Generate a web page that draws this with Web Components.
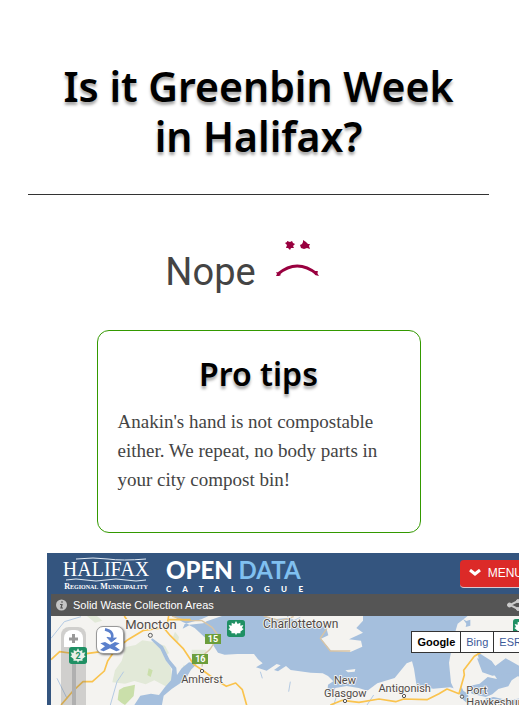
<!DOCTYPE html>
<html lang="en">
<head>
<meta charset="utf-8">
<meta name="viewport" content="width=device-width, initial-scale=1">
<title>Is it Greenbin Week in Halifax?</title>
<style>
html, body { margin: 0; height: 100%; }
body { background: #fff; color: #444; font-family: "Liberation Serif", serif; font-size: 19px; }
</style>
</head>
<body>
<greenbin-page>
  <page-title slot="title">Is it Greenbin Week in Halifax?</page-title>
  <week-answer slot="answer">Nope</week-answer>
  <pro-tip slot="tip">
    <span slot="heading">Pro tips</span>
    Anakin's hand is not compostable either. We repeat, no body parts in your city compost bin!
  </pro-tip>
  <open-data-frame slot="map">
    <collection-map></collection-map>
  </open-data-frame>
</greenbin-page>

<script>
function define(name, html) {
  const template = document.createElement('template');
  template.innerHTML = html;
  customElements.define(name, class extends HTMLElement {
    constructor() {
      super();
      this.attachShadow({ mode: 'open' }).append(template.content.cloneNode(true));
    }
  });
}

define('greenbin-page', `
<style>
:host { display: flex; flex-direction: column; min-height: 100vh; overflow: hidden; }
main { display: flex; flex-direction: column; flex: 1; }
header { margin: 0 30px 0 28px; padding: 61px 24px 33px; border-bottom: 1px solid #333; }
.answer { padding: 40px 48px 0 14px; }
.tip { display: flex; justify-content: center; padding: 30px 22px 20px 20px; }
.map { display: flex; flex: 1; margin-left: 47px; min-height: 152px; }
</style>
<main>
  <header><slot name="title"></slot></header>
  <section class="answer"><slot name="answer"></slot></section>
  <section class="tip"><slot name="tip"></slot></section>
  <section class="map"><slot name="map"></slot></section>
</main>`);

define('page-title', `
<style>
:host { display: block; }
h1 { margin: 0; color: #000; font: 600 41px/50px "Noto Sans", sans-serif; text-align: center; text-shadow: 0 3px 3px rgba(0,0,0,.35); }
</style>
<h1><slot></slot></h1>`);

define('week-answer', `
<style>
:host { display: flex; justify-content: center; gap: 20px; color: #444; }
p { margin: 0; font: 400 38px/56px Roboto, sans-serif; padding-top: 9px; }
svg { width: 44px; height: 40px; margin-top: 5px; }
</style>
<p><slot></slot></p>
<svg viewBox="0 0 44 40" role="img" aria-label="Sad face" fill="#99003f">
  <path d="M11 1l3 1 2-1 1 2 2 1-2 2 1 2-3 0-1 2-2-2-2 0 1-3-2-2 2-1z"/>
  <path d="M27 0l3 2 2 2 2 0-1 2 1 3-3-1-3 1-3-1-1-3 2-1 1-2z"/>
  <path d="M2 34Q21 18 41 34" fill="none" stroke="#99003f" stroke-width="3"/>
  <path d="M0 32l3 1 2 2-2 1-3 0 1-2zM38 31l4 0-1 2 2 3-4-1z"/>
</svg>`);

define('pro-tip', `
<style>
:host { display: block; box-sizing: border-box; width: 100%; max-width: 324px; border: 1px solid #390; border-radius: 12px; padding: 18px 36px 38px 20px; }
h2 { margin: 0 -16px 8px 0; color: #000; font: 600 32px/50px "Noto Sans", sans-serif; text-align: center; text-shadow: 0 3px 3px rgba(0,0,0,.35); }
p { margin: 0; line-height: 29px; }
</style>
<h2><slot name="heading"></slot></h2>
<p><slot></slot></p>`);

define('open-data-frame', `
<style>
:host { display: flex; flex: 1; min-width: 0; overflow: hidden; background: #34557f; font-family: "Liberation Sans", sans-serif; }
.wide { display: flex; flex-direction: column; flex: none; width: calc(100% + 32px); }
.top { display: flex; align-items: center; height: 41px; padding: 0 16px; color: #fff; }
.halifax { display: flex; flex-direction: column; align-items: center; flex: none; width: 86px; margin-right: 17px; font-family: "Liberation Serif", serif; white-space: nowrap; }
.halifax b { font-weight: 400; font-size: 20px; line-height: 17px; }
.halifax svg { display: block; width: 84px; height: 4px; }
.halifax small { font-size: 8px; line-height: 9px; font-weight: 700; font-variant: small-caps; }
.data { flex: none; width: 137px; padding-top: 2px; font-family: Lato, sans-serif; }
.data b { display: block; font-size: 24px; line-height: 29px; font-weight: 900; white-space: nowrap; }
.data em { font-style: normal; font-weight: 700; color: #80c0f0; }
.data span { display: block; font: 900 8px/10px Lato, sans-serif; text-align-last: justify; }
button { display: flex; align-items: center; gap: 7px; flex: none; height: 28px; margin-left: auto; padding: 0 12px 0 9px; border: 0; border-bottom: 1px solid #d8c8d0; border-radius: 4px; background: #dc2a28; color: #fff; font: 12px/26px "Liberation Sans", sans-serif; }
.bar { display: flex; align-items: center; height: 22px; margin-left: 4px; padding: 0 30px 0 5px; background: #555; color: #fff; font-size: 11px; }
.bar svg { flex: none; }
.bar h3 { flex: 1; margin: 0 0 0 6px; font-weight: 400; font-size: 11px; }
.body { display: flex; flex: 1; margin-left: 4px; }
</style>
<div class="wide">
  <div class="top">
    <div class="halifax">
      <svg viewBox="0 0 84 4" fill="none" stroke="#dfe8f2"><path d="M12 2Q30 0 44 2T82 2"/></svg>
      <b>HALIFAX</b>
      <svg viewBox="0 0 84 4" fill="none" stroke="#dfe8f2"><path d="M2 2q10-2 20 0t20 0 20 0 20 0"/></svg>
      <small>Regional Municipality</small>
    </div>
    <div class="data"><b>OPEN <em>DATA</em></b><span>C A T A L O G U E</span></div>
    <button type="button"><svg width="12" height="8" viewBox="0 0 12 8" fill="none" stroke="#fff" stroke-width="3"><path d="M1 1l5 4 5-4"/></svg>MENU</button>
  </div>
  <div class="bar">
    <svg width="11" height="12" viewBox="0 0 11 12"><circle cx="5.5" cy="6" r="5.5" fill="#c4c4c4"/><path d="M5 3h2M4 5.500h2L5 9h2" fill="none" stroke="#555" stroke-width="1.2"/></svg>
    <h3>Solid Waste Collection Areas</h3>
    <svg width="14" height="12" viewBox="0 0 14 12" fill="#ccc" stroke="#ccc"><path d="M11 2L3 6l8 4" fill="none" stroke-width="2"/><circle cx="2.500" cy="6" r="2"/><circle cx="11" cy="2" r="1.500"/><circle cx="11" cy="10" r="1.500"/></svg>
  </div>
  <div class="body"><slot></slot></div>
</div>`);

define('collection-map', `
<style>
:host { display: block; flex: 1; position: relative; overflow: hidden; background: #f4f3f0; }
.tiles { position: absolute; inset: 0; width: 100%; height: 100%; }
.zoom { position: absolute; left: 10px; top: 11px; bottom: 0; width: 25px; border-radius: 8px 8px 0 0; background: rgba(100,100,100,.25); }
.zoom::after { content: ""; position: absolute; left: 11px; top: 36px; bottom: 0; width: 4px; background: #b0b0b0; }
.zoom button { display: flex; align-items: center; justify-content: center; width: 19px; height: 17px; margin: 3px; padding: 0; border: 0; border-radius: 8px 8px 0 0; background: #fff; }
.marker { position: absolute; left: 18px; top: 31px; }
.locate { position: absolute; left: 45px; top: 10px; display: flex; align-items: center; justify-content: center; width: 28px; height: 28px; padding: 0; border: 1px solid #999; border-radius: 7px; background: #fff; box-shadow: 1px 1px 2px rgba(0,0,0,.5); }
nav { position: absolute; right: 20px; top: 15px; display: flex; background: #fff; border: 1px solid #333; font: 11px/20px "Liberation Sans", sans-serif; }
nav button { padding: 0 5px; border: 0; border-left: 1px solid #333; background: #fff; color: #3c5a9a; font: inherit; }
nav button:first-child { border-left: 0; font-weight: 700; color: #000; }
</style>
<svg class="tiles" viewBox="12 3 1500 267" preserveAspectRatio="xMinYMin slice">
  <defs>
    <path id="leaf" d="M0-22l5 9 8-4 0 9 9-2-4 9 5 3-10 8 1 5-11 0-3 6-3-6-11 0 1-5-10-8 5-3-4-9 9 2 0-9 8 4z" fill="#fff"/>
  </defs>
  <rect x="12" y="3" width="1500" height="900" fill="#f4f3f0"/>
  <g fill="#e2e9d8">
    <path d="M236 96l30-6 20-14 30 4 38 12 12 22-14 12 20 34 4 40-20 14-34-18-26 12-34-10-28 8-38-4 8-36 20-28zM120 3l30 0 16 14-22 6zM384 50l12 16-4 20-14-20zM410 150l18 10-14 30-20 6zM434 104l44 0 0 16-44 4z"/>
    <path d="M216 225l14-8 34-8-4 34-26 27-10-6-12-10zM305 160l12 6-6 20-10-6z" fill="#cadfaa"/>
  </g>
  <g fill="#a5bfdd">
    <path d="M358 3h19l30 18 20 8 42-4 10 -6 46-16h500l240 0-12 12-16 40-14 50-4 36 8 40 22 46 14 10 4 32-18-14-18-32-22-6-50 4-50-8-8-52-6-22-16 6-36 44-52 16-30 22-26-8-36-6-34 6-6 18-18-6 2-22 16-10-16-16-16-8-36-2-60-8-14-12-24 16-12-4 20-14-12-4-30 20-32-10 20-12-14-12-12-16-50 0-38 2-20-6-18-28-22-18-30-28-16-8-20 10 6-14 50-14 26-12 6-14-14-4-24-4 -14-24-20 6 -20 16-28 2-20-22-30-8-30 2-24-8z"/>
    <path d="M262 270l18-28 32-6 24 4 18-24 18-20 4-34-20-26-16-34-28-28 4-4 32 24 20 40 20 24 2 22 14-20 22-18 24 4-18 18-14 24-14 14-30 20-24 20-6 32z"/>
    <path d="M1290 110l44 28 10 16 32-24 40 22 100-20v60l-104-8-18 12-10 18-30 8-18 16-20 8-42-10-10-22 34-8 24-20 28 6-14-22-40-36zM1316 250l24-4 44 10 120-20v40h-190z"/>
  </g>
  <g fill="#f4f3f0">
    <path d="M650 3l30 10 40-4 30 8 60 4 28 18 6 22-22 10 30 36 58 4 36-16-4-18-36-4 42-20-20-14 20-22V3zM1222 60l10-34 30-23h250v106l-120-6-44 16-24-8-46 2-24 64-16 60-12-4-14-30-6-60z"/>
    <path d="M895 166l30-4-2 8-20 2zM1270 175l40-16 8 18-26 12z"/>
  </g>
  <path fill="#a5bfdd" d="M1248 12l10 6 12-4v18l-14 4 2-10zM1290 130l44 10 14 16 28-20 30 20 100-10v30h-130l-40 6-30-10z"/>
  <g fill="none" stroke="#b4cae3" stroke-width="3">
    <path d="M12 70l40-50 50-15M190 270l20-70 20-30M640 170l6 20M730 200l-5 30M960 270l20-30M30 190l30 60M720 3l20 14 20-10M860 270l10-30"/>
  </g>
  <g fill="none" stroke="#d8c4a4" stroke-width="4">
    <path d="M375 3l40 14 50 0 30 20 20 26-26 40-18 16-6 36M840 40l-20 30 30 38 60 0M650 3l50 14 40-12"/>
  </g>
  <g fill="none" stroke="#fac34d" stroke-width="5" stroke-linejoin="round">
    <path d="M12 134l26-24 30 4 50 2 44-6 44-8 34-26 50-30 60-8 20 24 38 38 32 48 30 20 38 28 30 18 28-10 20 20 14 50"/>
    <path d="M42 270l34-40 32-30 28 0 36-32 10-30 26-38M365 14h66M365 3l-8 44M232 3l16 24"/>
    <path d="M850 270l36-14 50 6 60-10 50 8 24-8 70 2 36-18 24-14 36 14 16-56 -2-14 32-42 40-24"/>
  </g>
  <g>
    <rect x="474" y="57" width="48" height="30" fill="#6c9e3c"/><rect x="435" y="117" width="48" height="30" fill="#6c9e3c"/>
    <rect x="540" y="15" width="54" height="51" rx="8" fill="#1f9064"/><use href="#leaf" x="567" y="40"/>
    <rect x="1398" y="12" width="54" height="51" rx="8" fill="#1f9064"/><use href="#leaf" x="1425" y="37"/>
  </g>
  <g fill="#f4f3f0" stroke="#555" stroke-width="3"><circle cx="310" cy="61" r="6"/><circle cx="465" cy="168" r="5"/><circle cx="894" cy="258" r="5"/><circle cx="1071" cy="243" r="5"/><circle cx="1245" cy="245" r="5"/></g>
  <g font-family="Roboto, sans-serif" font-size="33" fill="#514b48" stroke="#f8f7f4" stroke-width="5" paint-order="stroke" text-anchor="middle">
    <text x="312" y="42" font-size="39">Moncton</text>
    <text x="761" y="39" font-size="36">Charlottetown</text>
    <text x="465" y="203">Amherst</text>
    <text x="894" y="207">New</text>
    <text x="895" y="245">Glasgow</text>
    <text x="1073" y="230">Antigonish</text>
    <text x="1258" y="237" text-anchor="start">Port</text>
    <text x="1258" y="273" text-anchor="start">Hawkesbury</text>
  </g>
  <g font-family="Roboto, sans-serif" font-size="27" font-weight="700" fill="#fff" text-anchor="middle"><text x="498" y="82">15</text><text x="460" y="141">16</text></g>
</svg>
<div class="zoom"><button type="button" aria-label="Zoom in"><svg width="11" height="11" viewBox="0 0 11 11" stroke="#999" stroke-width="3"><path d="M1 6h9M5.500 1v9"/></svg></button></div>
<svg class="marker" width="18" height="17" viewBox="0 0 54 51"><rect width="54" height="51" rx="8" fill="#1f9064"/><path transform="translate(27 26)" d="M0-22l5 9 8-4 0 9 9-2-4 9 5 3-10 8 1 5-11 0-3 6-3-6-11 0 1-5-10-8 5-3-4-9 9 2 0-9 8 4z" fill="#e8efe8"/><text x="27" y="37" font-family="Roboto, sans-serif" font-size="27" font-weight="700" fill="#1f9064" text-anchor="middle">2</text></svg>
<button class="locate" type="button" aria-label="Zoom to area"><svg width="22" height="24" viewBox="0 0 66 72"><path d="M18 4Q46 10 38 32" fill="none" stroke="#5b80cc" stroke-width="8"/><path d="M24 28l13 14 15-12-14 1z" fill="#5b80cc" stroke="#5b80cc" stroke-width="3"/><path d="M4 46l14-4 15 8 15-8 14 4-14 9 15 11-11 4-19-9-19 9-11-4 15-11z" fill="#5b80cc"/></svg></button>
<nav aria-label="Base map"><button type="button">Google</button><button type="button">Bing</button><button type="button">ESRI</button></nav>`);
</script>
</body>
</html>
